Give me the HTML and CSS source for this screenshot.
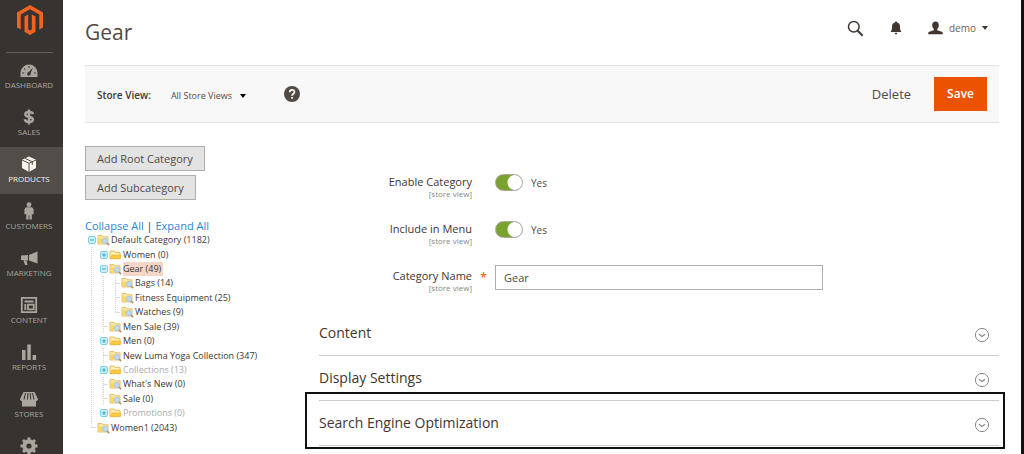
FILE: index.html
```html
<!DOCTYPE html>
<html lang="en">
<head>
<meta charset="utf-8">
<title>Gear / Categories</title>
<link rel="stylesheet" href="styles.css">
</head>
<body>
<svg class="sprite" aria-hidden="true">
  <symbol id="leaf" viewBox="0 0 13 12">
    <path d="M1 1.500h4l1 1.300h5v7.200H1z" fill="#fbe9a5" stroke="#e5bf6c"/>
    <path d="M1.500 4.500h6L6.500 9.500h-5z" fill="#fad568"/>
    <circle cx="8" cy="7" r="2.600" fill="#bcdcf5" stroke="#a9c8e2"/>
    <path d="M10 9l2.200 2.200" stroke="#a98f7c" stroke-width="1.600"/>
  </symbol>
  <symbol id="folder" viewBox="0 0 13 12">
    <path d="M1 2h4l1 1.300h5v6.200H1z" fill="#fdf0b4" stroke="#e6bd55"/>
    <path d="M1 9.800L3 6h9l-.8 3.800z" fill="#f8c93c" stroke="#e6b23c" stroke-width=".6"/>
  </symbol>
  <symbol id="minus" viewBox="0 0 8 8">
    <rect x=".5" y=".5" width="7" height="7" rx="1.500" fill="#c9f0f7" stroke="#7fd0e4"/>
    <path d="M2 4h4" stroke="#3fa9c6"/>
  </symbol>
  <symbol id="plus" viewBox="0 0 8 8">
    <rect x=".5" y=".5" width="7" height="7" rx="1.500" fill="#c9f0f7" stroke="#7fd0e4"/>
    <path d="M2 4h4M4 2v4" stroke="#3fa9c6"/>
  </symbol>
  <symbol id="down" viewBox="0 0 16 16">
    <circle cx="8" cy="8" r="6.600" fill="none" stroke="#8c8985"/>
    <path d="M5 7.300l3 2.200 3-2.200" fill="none" stroke="#8c8985" stroke-width="1.200"/>
  </symbol>
</svg>

<div class="app">
  <nav class="sidebar">
    <a class="logo" href="#" aria-label="Home">
      <svg width="28" height="32" viewBox="0 0 28 32"><path d="M14 1l13 7.500v15l-3.700 2.100v-15L14 5.300l-9.300 5.300v15L1 23.500v-15z" fill="#f26322"/><path d="M8.500 12.500l3.700-2.100v15.200l1.800 1 1.800-1V10.400l3.700 2.100v15.300L14 31l-5.500-3.200z" fill="#f26322"/></svg>
    </a>
    <ul class="menu">
      <li><a class="item" href="#"><svg width="18" height="18" viewBox="0 0 18 18"><path d="M.5 16V12a8.500 8.500 0 0 1 17 0v4z" fill="currentColor"/><path d="M7.800 12L13 6.500 10 13.500z" fill="#373330"/><path d="M2.300 12h2M4 7.500l1.500 1.300M9 5v2M14 12h1.800" stroke="#373330"/><circle cx="8.800" cy="13" r="1.800" fill="#373330"/></svg>Dashboard</a></li>
      <li><a class="item" href="#"><svg width="18" height="18" viewBox="0 0 18 18"><path d="M13 6C12.500 4.500 11 4 9 4 6.800 4 5.300 5 5.300 6.500 5.300 10 13 8 13 11.600 13 13.300 11.300 14 9 14s-4-.9-4.300-2.700M9 1.500v15" fill="none" stroke="currentColor" stroke-width="2.400"/></svg>Sales</a></li>
      <li><a class="item active" href="#"><svg width="18" height="18" viewBox="0 0 18 18"><path d="M9 1.500l7 3.200v8.300l-7 4-7-4V4.700z" fill="currentColor"/><path d="M2 5l7 3.300L16 5M9 8.300V17M5.300 3.500l7 3.300v3" fill="none" stroke="#524d49"/></svg>Products</a></li>
      <li><a class="item" href="#"><svg width="18" height="18" viewBox="0 0 18 18"><circle cx="9" cy="2.700" r="2.400" fill="currentColor"/><path d="M6 5.300h6l1.600 2v5h-1.800v9l0-4V17.500H9.400v-4h-.8v4H6.200V12.300H4.400v-5z" fill="currentColor"/></svg>Customers</a></li>
      <li><a class="item" href="#"><svg width="18" height="18" viewBox="0 0 18 18"><path d="M17.500 2.500v12L9 11.500V6zM1 6.500l7-.5v5.500l-7-.5zM3.500 11.500h3l1 4.500H5z" fill="currentColor"/></svg>Marketing</a></li>
      <li><a class="item" href="#"><svg width="18" height="18" viewBox="0 0 18 18"><path d="M1.800 1.800h14.400v14.400H1.800zM4.500 5.500h9M5.300 8v6M8 8.700h5.700v4.600H8z" fill="none" stroke="currentColor" stroke-width="1.800"/></svg>Content</a></li>
      <li><a class="item" href="#"><svg width="18" height="18" viewBox="0 0 18 18"><path d="M2 7h3.500v10H2zM7.300 1.500h3.500V17H7.300zM12.600 12h3.500v5h-3.500z" fill="currentColor"/></svg>Reports</a></li>
      <li><a class="item" href="#"><svg width="18" height="18" viewBox="0 0 18 18"><path d="M3.500 2h11L18 9c0 1.500-1 2-2 2v5.500H2V11C1 11 0 10.500 0 9z" fill="currentColor"/><path d="M5.500 3L4 9.500M8 3l-.5 6.500M10.200 3l.5 6.500M12.500 3L14 9.500" stroke="#373330"/></svg>Stores</a></li>
      <li><a class="item" href="#" aria-label="System"><svg width="18" height="18" viewBox="0 0 18 18"><circle cx="9" cy="9" r="4.700" fill="none" stroke="currentColor" stroke-width="4"/><path d="M9 .5v17M.5 9h17M3 3l12 12M15 3L3 15" stroke="currentColor" stroke-width="3"/><circle cx="9" cy="9" r="2.600" fill="#373330"/></svg></a></li>
    </ul>
  </nav>

  <main class="page">
    <header class="header">
      <h1 class="title">Gear</h1>
      <div class="tools">
        <button class="icon-btn" aria-label="Search"><svg width="17" height="17" viewBox="0 0 17 17" fill="none" stroke="#41362f"><circle cx="6.800" cy="6.800" r="5.300" stroke-width="1.500"/><path d="M10.700 10.700l5 5" stroke-width="2"/></svg></button>
        <button class="icon-btn" aria-label="Notifications"><svg width="12" height="14" viewBox="0 0 12 14"><path d="M6 .5c.8 0 1 .6 1 1 2 .5 3 2 3 4 0 3 .3 4 1.500 5.500H.5C1.700 9.500 2 8.500 2 5.500c0-2 1-3.500 3-4 0-.4.200-1 1-1zM4.700 11.700h2.600C7.300 14 4.700 14 4.700 11.700z" fill="#41362f"/></svg></button>
        <button class="icon-btn user"><svg width="15" height="14" viewBox="0 0 15 14"><path d="M7.500.5c2 0 3.300 1.300 3.300 3.500 0 1.700-.6 3-1.600 4v1.200l4.600 1.500c.8.300 1 1 1 2.500H.2c0-1.500.2-2.200 1-2.500l4.600-1.500V8c-1-1-1.600-2.300-1.600-4C4.200 1.800 5.500.5 7.500.5z" fill="#41362f"/></svg><span>demo</span><i class="caret"></i></button>
      </div>
    </header>

    <div class="toolbar">
      <span class="store-label">Store View:</span>
      <button class="store-switch">All Store Views<i class="caret"></i></button>
      <a class="help" href="#" aria-label="Help"><svg width="16" height="16" viewBox="0 0 16 16"><circle cx="8" cy="8" r="8" fill="#514943"/><path d="M5.700 6.300C5.700 3 10.500 3.200 10.500 6c0 1.700-2.400 1.800-2.400 3.700M8.100 11v1.800" fill="none" stroke="#fff" stroke-width="1.700"/></svg></a>
      <button class="delete">Delete</button>
      <button class="save">Save</button>
    </div>

    <div class="columns">
      <aside class="side">
        <button class="add">Add Root Category</button>
        <button class="add">Add Subcategory</button>
        <div class="tree-actions"><a href="#">Collapse All</a> <span>|</span> <a href="#">Expand All</a></div>
        <ul class="tree">
          <li class="node l0"><svg class="toggle"><use href="#minus"/></svg><svg class="pic"><use href="#leaf"/></svg><a href="#">Default Category (1182)</a></li>
          <li class="node l1"><svg class="toggle"><use href="#plus"/></svg><svg class="pic"><use href="#folder"/></svg><a href="#">Women (0)</a></li>
          <li class="node l1"><svg class="toggle"><use href="#minus"/></svg><svg class="pic"><use href="#leaf"/></svg><a class="selected" href="#">Gear (49)</a></li>
          <li class="node l2"><i class="elbow"></i><svg class="pic"><use href="#leaf"/></svg><a href="#">Bags (14)</a></li>
          <li class="node l2"><i class="elbow"></i><svg class="pic"><use href="#leaf"/></svg><a href="#">Fitness Equipment (25)</a></li>
          <li class="node l2"><i class="elbow end"></i><svg class="pic"><use href="#leaf"/></svg><a href="#">Watches (9)</a></li>
          <li class="node l1"><i class="elbow"></i><svg class="pic"><use href="#leaf"/></svg><a href="#">Men Sale (39)</a></li>
          <li class="node l1"><svg class="toggle"><use href="#plus"/></svg><svg class="pic"><use href="#folder"/></svg><a href="#">Men (0)</a></li>
          <li class="node l1"><i class="elbow"></i><svg class="pic"><use href="#leaf"/></svg><a href="#">New Luma Yoga Collection (347)</a></li>
          <li class="node l1"><svg class="toggle"><use href="#plus"/></svg><svg class="pic"><use href="#folder"/></svg><a class="off" href="#">Collections (13)</a></li>
          <li class="node l1"><i class="elbow"></i><svg class="pic"><use href="#leaf"/></svg><a href="#">What's New (0)</a></li>
          <li class="node l1"><i class="elbow"></i><svg class="pic"><use href="#leaf"/></svg><a href="#">Sale (0)</a></li>
          <li class="node l1"><svg class="toggle"><use href="#plus"/></svg><svg class="pic"><use href="#folder"/></svg><a class="off" href="#">Promotions (0)</a></li>
          <li class="node l0"><i class="elbow end"></i><svg class="pic"><use href="#leaf"/></svg><a href="#">Women1 (2043)</a></li>
        </ul>
      </aside>

      <div class="content">
        <form class="form">
          <div class="field">
            <label class="label" for="enable">Enable Category<small>[store view]</small></label>
            <div class="control"><input class="switch" type="checkbox" id="enable" checked><span>Yes</span></div>
          </div>
          <div class="field">
            <label class="label" for="menu">Include in Menu<small>[store view]</small></label>
            <div class="control"><input class="switch" type="checkbox" id="menu" checked><span>Yes</span></div>
          </div>
          <div class="field required">
            <label class="label" for="name">Category Name<small>[store view]</small></label>
            <div class="control"><input class="text" type="text" id="name" value="Gear"></div>
          </div>
        </form>
        <div class="sections">
          <button class="section">Content<svg width="16" height="16"><use href="#down"/></svg></button>
          <button class="section">Display Settings<svg width="16" height="16"><use href="#down"/></svg></button>
          <button class="section marked">Search Engine Optimization<svg width="16" height="16"><use href="#down"/></svg></button>
        </div>
      </div>
    </div>
  </main>
</div>
</body>
</html>
```

FILE: styles.css
```css
* { box-sizing: border-box; }
body {
  margin: 0;
  background: #fff;
  color: #41362f;
  font: 10px/14px "Open Sans", "Noto Sans", sans-serif;
}
button { font: inherit; color: inherit; border: 0; background: none; padding: 0; cursor: pointer; }
a { color: inherit; text-decoration: none; }
ul { list-style: none; margin: 0; padding: 0; }
svg { flex: none; display: block; }
.sprite { position: absolute; width: 0; height: 0; }

.app { display: flex; height: 100vh; overflow: hidden; border-right: 3px solid #111; }

.sidebar { flex: none; width: 63px; background: #373330; }
.logo { display: flex; justify-content: center; height: 53px; margin: 0 10px 0 6px; padding: 4px 0 0; border-bottom: 1px solid #66605b; }
.item {
  display: flex; flex-direction: column; align-items: center;
  height: 47px; padding: 8px 5px 0 0;
  color: #aaa69d; font-size: 8px; line-height: 12px; text-transform: uppercase;
}
.item.active { background: #524d49; color: #f7f3eb; }

.page { flex: 1; min-width: 0; padding: 0 22px; }
.header { display: flex; justify-content: space-between; align-items: center; height: 65px; }
.title { margin: 0; padding-bottom: 2px; color: #514943; font-size: 21px; line-height: 28px; font-weight: 400; }
.tools { display: flex; align-items: center; gap: 26px; padding: 0 11px 9px 0; }
.icon-btn { display: flex; align-items: center; }
.user { gap: 6px; color: #6b635d; }
.caret { border: 3px solid transparent; border-top: 4px solid #41362f; border-bottom: 0; }

.toolbar {
  display: flex; align-items: center; height: 58px; padding: 0 12px;
  background: #f8f8f8; border: solid #e3e3e3; border-width: 1px 0;
}
.store-label { font-weight: 600; margin-right: 20px; padding-top: 2px; }
.store-switch { display: flex; align-items: center; gap: 8px; margin-right: 38px; padding-top: 3px; color: #514943; font-size: 9px; line-height: 12px; }
.store-switch .caret { border-top-color: #000; }
.delete { margin-left: auto; margin-right: 23px; color: #514943; font-size: 13px; font-weight: 500; }
.save { height: 34px; padding: 0 13px; background: #eb5202; color: #fff; font-size: 12px; font-weight: 600; }

.columns { display: flex; padding-top: 23px; }
.side { flex: none; width: 234px; }
.add {
  display: block; height: 25px; margin-bottom: 4px; padding: 0 11px;
  background: #e3e3e3; border: 1px solid #adadad; color: #514943;
  font-size: 11px; font-weight: 500;
}
.tree-actions { margin-top: 19px; font-size: 11px; line-height: 14px; }
.tree-actions a { color: #2a86d0; }

.tree { display: grid; grid-auto-rows: 1fr; height: 202px; padding-left: 3px; font-size: 9px; }
.node { display: flex; align-items: center; gap: 1px; white-space: nowrap; }
.node.l1 { padding-left: 12px; background: repeating-linear-gradient(#d5d5d5 0 1px, transparent 1px 2px) 3px 0 / 1px 100% no-repeat; }
.node.l2 {
  padding-left: 24px;
  background: repeating-linear-gradient(#d5d5d5 0 1px, transparent 1px 2px) 3px 0 / 1px 100% no-repeat,
              repeating-linear-gradient(#d5d5d5 0 1px, transparent 1px 2px) 15px 0 / 1px 100% no-repeat;
}
.toggle { width: 8px; height: 8px; }
.pic { width: 13px; height: 12px; }
.elbow {
  align-self: stretch; width: 8px;
  background: repeating-linear-gradient(#d5d5d5 0 1px, transparent 1px 2px) 3px 0 / 1px 100% no-repeat,
              linear-gradient(#ddd, #ddd) 3px 50% / 5px 1px no-repeat;
}
.elbow.end {
  background: repeating-linear-gradient(#d5d5d5 0 1px, transparent 1px 2px) 3px 0 / 1px 50% no-repeat,
              linear-gradient(#ddd, #ddd) 3px 50% / 5px 1px no-repeat;
}
.selected { background: #f5d6c7; padding-right: 2px; }
.off { color: #aaa; }

.content { flex: 1; min-width: 0; }
.form { display: grid; gap: 22px; padding-top: 23px; }
.field { display: grid; grid-template-columns: 153px 1fr; column-gap: 23px; height: 25px; }
.label { display: flex; flex-direction: column; padding-top: 6px; text-align: right; font-size: 11px; line-height: 14px; font-weight: 500; }
.label small { color: #8c8580; font-size: 8px; line-height: 9px; font-weight: 400; }
.required .label { position: relative; }
.required .label::after { content: "*"; position: absolute; left: 100%; top: 7px; margin-left: 8px; color: #eb5202; font-size: 13px; }
.control { display: flex; align-items: center; gap: 8px; color: #514943; }
.switch {
  appearance: none; width: 28px; height: 17px; margin: 0;
  border: 1px solid #aaa6a0; border-radius: 9px;
  background: radial-gradient(circle at 19px 50%, #fff 7px, #79a22e 8px);
}
.switch, .switch + span { margin-bottom: 2px; }
.text { width: 328px; height: 25px; margin: 0; padding: 0 8px; border: 1px solid #adadad; color: #514943; font: inherit; font-size: 11px; }

.sections { display: grid; padding-top: 23px; }
.section {
  display: flex; align-items: center; justify-content: space-between;
  height: 45px; padding: 0 9px 0 0; border-bottom: 1px solid #ccc;
  font-size: 14px; line-height: 18px; font-weight: 500; text-align: left;
}
.section svg { margin-top: 4px; }
.marked { position: relative; }
.marked::after { content: ""; position: absolute; inset: -9px -6px -4px -14px; border: 2px solid #111; }
```
